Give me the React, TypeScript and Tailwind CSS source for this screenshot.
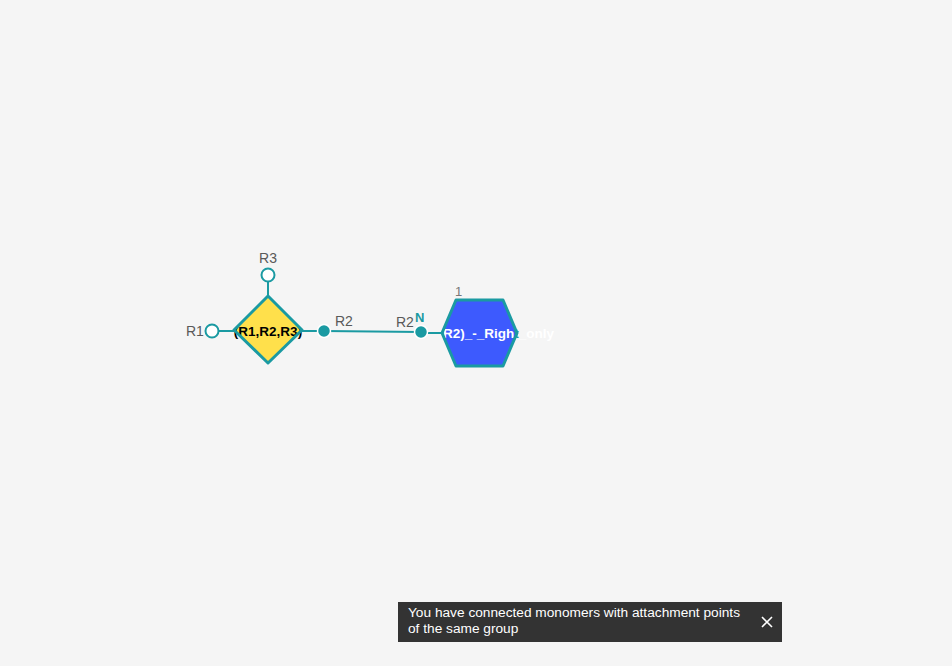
import React from "react";

const TEAL = "#1a9aa2";
const FONT = '"Liberation Sans", Arial, sans-serif';

export default function App() {
  return (
    <div className="relative w-[952px] h-[666px] bg-[#f5f5f5] overflow-hidden" style={{ fontFamily: FONT }}>
      <svg className="absolute left-0 top-0" width="952" height="666" viewBox="0 0 952 666" fontFamily={FONT}>
        {/* R3 */}
        <line x1="268" y1="282" x2="268" y2="296" stroke={TEAL} strokeWidth="2" />
        <circle cx="268" cy="275" r="6.5" fill="#fff" stroke={TEAL} strokeWidth="2" />
        <text x="268" y="263" textAnchor="middle" fontSize="14" fill="#595959">R3</text>
        {/* R1 */}
        <line x1="219" y1="331" x2="235" y2="331" stroke={TEAL} strokeWidth="2" />
        <circle cx="212" cy="331" r="6.5" fill="#fff" stroke={TEAL} strokeWidth="2" />
        <text x="186" y="336" fontSize="14" fill="#595959">R1</text>
        {/* R2 right of diamond */}
        <line x1="302" y1="331" x2="318" y2="331" stroke={TEAL} strokeWidth="2" />
        {/* bond */}
        <line x1="324" y1="331" x2="421" y2="332" stroke={TEAL} strokeWidth="2" />
        <circle cx="324" cy="331" r="6.5" fill={TEAL} stroke="#fff" strokeWidth="1.5" />
        <text x="335" y="326" fontSize="14" fill="#595959">R2</text>
        {/* diamond */}
        <polygon points="268,296 302,330 268,363 234,330" fill="#ffe04b" />
        <text x="268" y="336" textAnchor="middle" fontSize="13.5" fontWeight="bold" fill="#000">(R1,R2,R3)</text>
        <polygon points="268,296 302,330 268,363 234,330" fill="none" stroke={TEAL} strokeWidth="3" strokeLinejoin="round" />
        {/* right monomer */}
        <line x1="428" y1="333" x2="442" y2="333" stroke={TEAL} strokeWidth="2" />
        <circle cx="421" cy="332" r="6.5" fill={TEAL} stroke="#fff" strokeWidth="1.5" />
        <text x="396" y="327" fontSize="14" fill="#595959">R2</text>
        <text x="415" y="322" fontSize="13" fontWeight="bold" fill={TEAL}>N</text>
        <text x="455" y="296" fontSize="13" fill="#777">1</text>
        <polygon points="442,333 456,300 503,300 517,333 503,366 456,366" fill="#3d5afe" />
        <text x="443" y="338" fontSize="13.5" fontWeight="bold" fill="#fff">
          R2)_-_Righ<tspan fill={TEAL}>t</tspan>_only
        </text>
        <polygon points="442,333 456,300 503,300 517,333 503,366 456,366" fill="none" stroke={TEAL} strokeWidth="3" strokeLinejoin="round" />
      </svg>

      <div className="absolute left-[398px] top-[602px] w-[384px] h-[40px] bg-[#333333] flex items-center justify-between pl-[10px] pr-[8px]">
        <p className="text-[13.7px] leading-[16px] text-white -mt-[2px]">
          You have connected monomers with attachment points
          <br />
          of the same group
        </p>
        <svg width="14" height="14" viewBox="0 0 14 14" className="shrink-0">
          <path d="M2 2 L12 12 M12 2 L2 12" stroke="#fff" strokeWidth="1.6" />
        </svg>
      </div>
    </div>
  );
}
